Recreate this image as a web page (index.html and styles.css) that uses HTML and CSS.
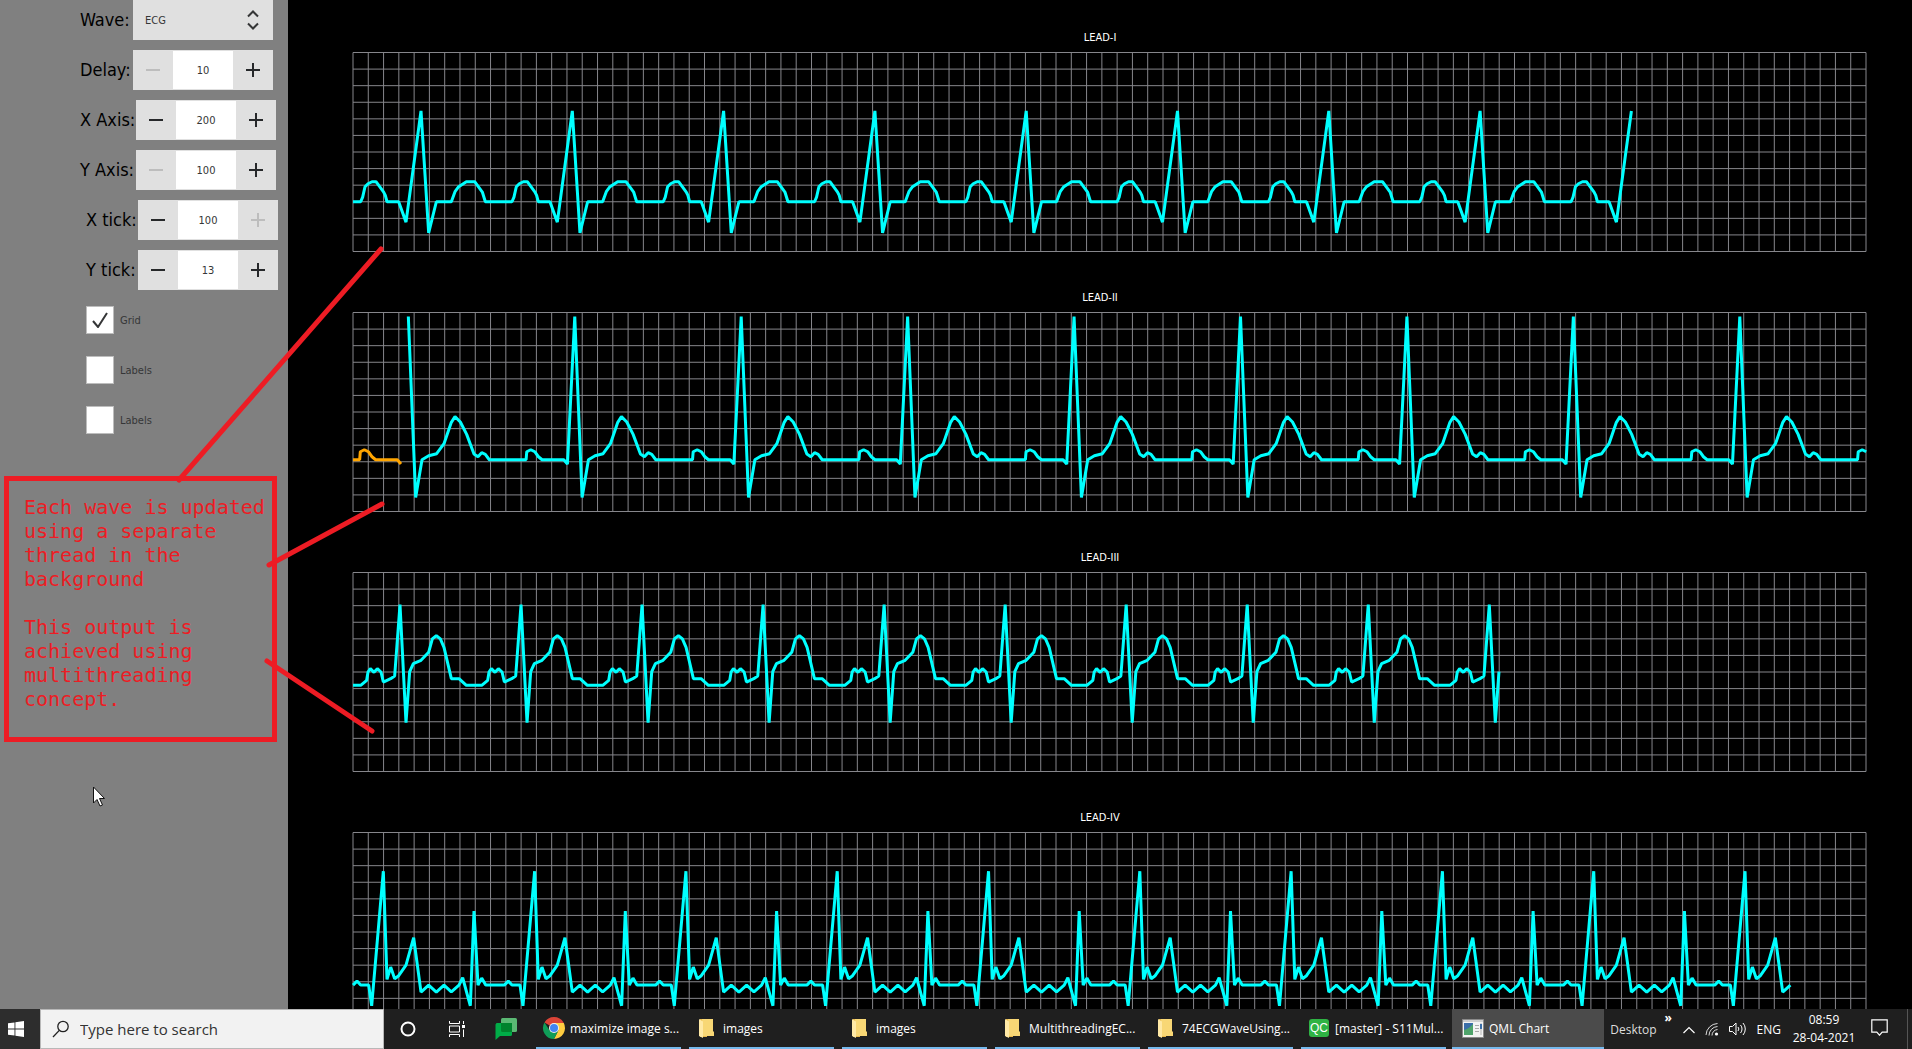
FILE: index.html
```html
<!DOCTYPE html>
<html lang="en">
<head>
<meta charset="utf-8">
<title>QML Chart</title>
<link rel="stylesheet" href="styles.css">
</head>
<body>
<div class="window">
  <aside class="sidebar">
    <div class="row">
      <label class="caption" for="wave">Wave:</label>
      <div class="combo">
        <select id="wave"><option>ECG</option><option>Sine</option></select>
        <svg class="combo-arrows" viewBox="0 0 12 20"><path d="M1 6.500 6 1.500 11 6.500M1 13.500 6 18.500 11 13.500"/></svg>
      </div>
    </div>
    <div class="row">
      <label class="caption" for="delay">Delay:</label>
      <div class="spin"><button class="minus" aria-label="Decrease delay" disabled></button><input id="delay" type="text" value="10"><button class="plus" aria-label="Increase delay"></button></div>
    </div>
    <div class="row axis">
      <label class="caption" for="xaxis">X Axis:</label>
      <div class="spin"><button class="minus" aria-label="Decrease X axis"></button><input id="xaxis" type="text" value="200"><button class="plus" aria-label="Increase X axis"></button></div>
    </div>
    <div class="row axis">
      <label class="caption" for="yaxis">Y Axis:</label>
      <div class="spin"><button class="minus" aria-label="Decrease Y axis" disabled></button><input id="yaxis" type="text" value="100"><button class="plus" aria-label="Increase Y axis"></button></div>
    </div>
    <div class="row tick">
      <label class="caption" for="xtick">X tick:</label>
      <div class="spin"><button class="minus" aria-label="Decrease X tick"></button><input id="xtick" type="text" value="100"><button class="plus" aria-label="Increase X tick" disabled></button></div>
    </div>
    <div class="row tick">
      <label class="caption" for="ytick">Y tick:</label>
      <div class="spin"><button class="minus" aria-label="Decrease Y tick"></button><input id="ytick" type="text" value="13"><button class="plus" aria-label="Increase Y tick"></button></div>
    </div>
    <div class="row tick"><label class="check"><input type="checkbox" checked>Grid</label></div>
    <div class="row tick"><label class="check"><input type="checkbox">Labels</label></div>
    <div class="row tick"><label class="check"><input type="checkbox">Labels</label></div>
  </aside>

  <main class="charts">
    <section class="chart"><h2>LEAD-I</h2><div class="frame"><svg class="plot" data-lead="1" viewBox="0 -1.5 4539 596" preserveAspectRatio="none"></svg></div></section>
    <section class="chart"><h2>LEAD-II</h2><div class="frame"><svg class="plot" data-lead="2" viewBox="0 -1.5 4539 596" preserveAspectRatio="none"></svg></div></section>
    <section class="chart"><h2>LEAD-III</h2><div class="frame"><svg class="plot" data-lead="3" viewBox="0 -1.5 4539 596" preserveAspectRatio="none"></svg></div></section>
    <section class="chart"><h2>LEAD-IV</h2><div class="frame"><svg class="plot" data-lead="4" viewBox="0 -1.5 4539 596" preserveAspectRatio="none"></svg></div></section>
  </main>

  <div class="note">
    <p>Each wave is updated using a separate thread in the background</p>
    <p>This output is achieved using multithreading concept.</p>
  </div>
  <svg class="pointers" width="400" height="820" viewBox="0 0 400 820">
    <path class="pointer" d="M179 480 381 249M269 565 382 504M267 661 372 731"/>
    <path class="cursor" d="M93.500 787v16l3.500-3.500 3 6.500 2.500-1-3-6.500h5z"/>
  </svg>
</div>

<footer class="taskbar">
  <button class="start" aria-label="Start">
    <svg width="16" height="16" viewBox="0 0 16 16"><path fill="#fff" d="M0 2.300 6.500 1.400v6.200H0zM7.400 1.300 16 0v7.600H7.400zM0 8.400h6.500v6.200L0 13.700zM7.400 8.400H16V16l-8.600-1.300z"/></svg>
  </button>
  <div class="search">
    <svg width="18" height="18" viewBox="0 0 18 18"><circle cx="11" cy="6.500" r="5.200"/><path d="M7.300 10.400 1 17"/></svg>
    <input type="text" aria-label="Search" placeholder="Type here to search">
  </div>
  <div class="tools">
    <button class="tool" aria-label="Cortana"><svg width="18" height="18" viewBox="0 0 18 18"><circle cx="9" cy="9" r="6.500" fill="none" stroke="#fff" stroke-width="2"/></svg></button>
    <button class="tool" aria-label="Task View"><svg width="18" height="16" viewBox="0 0 18 16"><path fill="none" stroke="#fff" d="M1.500 0v2.500h10V0M1.500 5h10v6h-10zM1.500 16v-2.500h10V16M15.500 0v3M15.500 8.500V16"/><path fill="#fff" d="M14 4h3v3h-3z"/></svg></button>
    <button class="tool" aria-label="Chat"><svg width="22" height="22" viewBox="0 0 22 22"><rect x="6" width="16" height="14" rx="1.500" fill="#5bb974"/><path fill="#00ac47" d="M1.500 5H17v11.500a1.500 1.500 0 0 1-1.500 1.500H5l-4.500 4V6.500z"/><path fill="#00832d" d="M6 5h11v9H7.500A1.500 1.500 0 0 1 6 12.500z"/></svg></button>
  </div>

  <nav class="tasks">
    <button class="task"><svg class="icon" viewBox="0 0 24 24"><path fill="#db4437" d="M12 12 2.470 6.500A11 11 0 0 1 21.530 6.500z"/><path fill="#db4437" d="M12 7h9.800l-.3-.5H12z"/><path fill="#ffcd40" d="M12 7h9.800a11 11 0 0 1-9.800 16l4.330-8.500z"/><path fill="#0f9d58" d="M2.470 6.500 7.670 14.500 12 17l4.330-2.500L12 23A11 11 0 0 1 2.470 6.500z"/><circle cx="12" cy="12" r="5" fill="#f1f1f1"/><circle cx="12" cy="12" r="4" fill="#4285f4"/></svg><span>maximize image s...</span></button>
    <button class="task"><svg class="icon" viewBox="0 0 24 24"><use href="#folder"/></svg><span>images</span></button>
    <button class="task"><svg class="icon" viewBox="0 0 24 24"><use href="#folder"/></svg><span>images</span></button>
    <button class="task"><svg class="icon" viewBox="0 0 24 24"><use href="#folder"/></svg><span>MultithreadingEC...</span></button>
    <button class="task"><svg class="icon" viewBox="0 0 24 24"><use href="#folder"/></svg><span>74ECGWaveUsing...</span></button>
    <button class="task"><span class="icon qc">QC</span><span>[master] - S11Mul...</span></button>
    <button class="task active"><svg class="icon" viewBox="0 0 24 24"><path fill="#f3f3f3" stroke="#8a8a8a" d="M1.500 3.500h21v18h-21z"/><path fill="#cfcfcf" d="M2 4h20v2H2z"/><path fill="#3b6ea8" d="M3 7h9v12H3z"/><path fill="#4fa36b" d="M3 14c4-1 7-4 9-6v11H3z"/><path stroke="#a9a9a9" d="M14 9.500h4M14 12.500h4M14 15.500h4"/><path fill="#d5d5d5" d="M19 7h2v12h-2z"/><path fill="#3b6ea8" d="M19 8h2v5h-2z"/></svg><span>QML Chart</span></button>
  </nav>

  <div class="tray">
    <button class="desktop">Desktop<span class="more">»</span></button>
    <button class="chevron" aria-label="Hidden icons"><svg width="12" height="8" viewBox="0 0 12 8"><path fill="none" stroke="#fff" stroke-width="1.200" d="M.5 7 6 1.500 11.500 7"/></svg></button>
    <svg width="14" height="14" viewBox="0 0 14 14"><g fill="none" stroke="#ddd"><path d="M1 13A12 12 0 0 1 12.500 1.500"/><path d="M4 13.500A9 9 0 0 1 12.500 4.500"/><path d="M7 13.500A6 6 0 0 1 12.500 7.500"/></g><circle cx="11.500" cy="12" r="1.600" fill="#fff"/></svg>
    <svg width="18" height="14" viewBox="0 0 18 14"><g fill="none" stroke="#fff"><path d="M.5 4.500h3l3.500-3.500v12L3.500 9.500h-3zM9 5a3 3 0 0 1 0 4M11.500 3a6 6 0 0 1 0 8M14 1a9 9 0 0 1 0 12"/></g></svg>
    <span class="lang">ENG</span>
    <time class="clock" datetime="2021-04-28T08:59"><span>08:59</span><span>28-04-2021</span></time>
    <button class="notices" aria-label="Notifications"><svg width="17" height="18" viewBox="0 0 17 18"><path fill="none" stroke="#fff" stroke-width="1.200" d="M.8 1.800h15.400v12.400h-5l-2.700 3-2.700-3H.8z"/></svg></button>
  </div>
</footer>

<svg class="defs" width="0" height="0"><defs><g id="folder"><path fill="#e8b84a" d="M5 3h6l1 1v17H5z"/><path fill="#f8d775" d="M7 3h11v12l1 1v4H8z"/><path fill="#ffe9a6" d="M4 3l4 2.500V22l-4-2z"/></g></defs></svg>
<script src="charts.js"></script>
</body>
</html>
```
FILE: styles.css
```css
* { box-sizing: border-box; }

body {
  margin: 0;
  height: 100vh;
  display: flex;
  flex-direction: column;
  overflow: hidden;
  background: #000;
  font-family: "Open Sans", "Noto Sans", sans-serif;
}

button, input, select { font: inherit; border: 0; margin: 0; padding: 0; border-radius: 0; }
button { background: none; color: inherit; }

.window {
  position: relative;
  flex: 1;
  min-height: 0;
  display: flex;
  overflow: hidden;
  font: 11px "DejaVu Sans Condensed", "Noto Sans", sans-serif;
}

/* control panel */
.sidebar {
  width: 288px;
  flex: none;
  display: flex;
  flex-direction: column;
  gap: 10px;
  background: #808080;
  color: #353637;
}
.row { display: flex; align-items: center; height: 40px; padding-left: 80px; }
.row.tick { padding-left: 86px; }
.caption { width: 53px; font-size: 18px; line-height: 40px; white-space: nowrap; color: #000; }
.axis .caption { width: 56px; }
.tick .caption { width: 52px; }

.combo { position: relative; width: 140px; height: 40px; }
.combo select {
  appearance: none;
  width: 100%;
  height: 100%;
  padding-left: 12px;
  background: #e0e0e0;
  color: #353637;
}
.combo-arrows { position: absolute; right: 14px; top: 10px; width: 12px; height: 20px; fill: none; stroke: #353637; stroke-width: 2; pointer-events: none; }

.spin { display: flex; width: 140px; height: 40px; background: #e0e0e0; }
.spin input {
  width: 60px;
  margin: 1px 0;
  background: #fff;
  text-align: center;
  color: #353637;
}
.spin button {
  width: 40px;
  color: #26282a;
  background: linear-gradient(currentColor, currentColor) center / 14px 2px no-repeat;
}
.spin .plus { background: linear-gradient(currentColor, currentColor) center / 14px 2px no-repeat, linear-gradient(currentColor, currentColor) center / 2px 14px no-repeat; }
.spin button:disabled { color: #bdbdbd; }

.check { display: flex; align-items: center; gap: 6px; }
.check input { appearance: none; width: 28px; height: 28px; background: #fff; border: 1px solid #bdbdbd; }
.check input:checked {
  background: #fff url("data:image/svg+xml,%3Csvg xmlns='http://www.w3.org/2000/svg' width='16' height='16'%3E%3Cpath d='M1 9l5 6L15 1' fill='none' stroke='%23353637' stroke-width='2'/%3E%3C/svg%3E") center no-repeat;
}

/* charts */
.charts { flex: 1; min-width: 0; padding-top: 28px; overflow: hidden; }
.chart { height: 260px; }
.chart h2 { margin: 0 0 4px; color: #fff; text-align: center; font-size: 11px; font-weight: 400; line-height: 20px; }
.frame { padding: 0 46px 0 65px; }
.plot { display: block; width: 100%; height: 199px; overflow: visible; fill: none; }
.plot path { vector-effect: non-scaling-stroke; }
.grid { stroke: #86868b; stroke-width: 1; }
.trace { stroke: #0ff; stroke-width: 3; stroke-linejoin: bevel; }
.trace.fresh { stroke: orange; }

/* annotation over the panel */
.note {
  position: absolute;
  left: 4px;
  top: 476px;
  width: 273px;
  height: 266px;
  padding: 14px 0 0 15px;
  border: 5px solid #ed1c24;
  color: #ed1c24;
  font: 20px/24px "DejaVu Sans Mono", monospace;
}
.note p { margin: 0 0 24px; }
.pointers { position: absolute; left: 0; top: 0; pointer-events: none; }
.pointer { fill: none; stroke: #ed1c24; stroke-width: 5; stroke-linecap: round; }
.cursor { fill: #fff; stroke: #111; }

/* taskbar */
.taskbar { flex: none; height: 40px; display: flex; background: #1f1f1f; color: #fff; font-size: 12px; }
.start { width: 40px; background: #2d2d2d; display: grid; place-items: center; padding-right: 8px; }
.search { width: 344px; display: flex; align-items: center; gap: 10px; padding-left: 11px; background: #f2f2f2; border: 1px solid #b8b8b8; }
.search svg { flex: none; fill: none; stroke: #222; stroke-width: 1.3; }
.search input { flex: 1; min-width: 0; background: none; font-size: 15px; }
.search input::placeholder { color: #333; opacity: 1; }
.tools { display: flex; width: 152px; }
.tool { width: 49px; padding-right: 1px; display: grid; place-items: center; }
.tasks { display: flex; gap: 8px; }
.task { width: 145px; display: flex; align-items: center; gap: 4px; padding-left: 6px; border-bottom: 2px solid #76b9ed; white-space: nowrap; text-align: left; }
.task .icon { flex: none; width: 24px; height: 24px; }
.task .qc { width: 20px; height: 18px; margin: 0 2px; background: #2fb344; border-radius: 3px; text-align: center; font: 12px/18px "Liberation Sans", sans-serif; }
.task.active { width: 152px; margin-left: -2px; padding-left: 9px; background: #4b4b4b; }
.tray { flex: 1; display: flex; align-items: center; justify-content: flex-end; gap: 10px; margin-right: 4px; padding-right: 19px; border-right: 1px solid #555; }
.desktop { position: relative; color: #ddd; margin-right: 16px; }
.more { position: absolute; left: 100%; top: -12px; margin-left: 8px; font-weight: 700; color: #fff; }
.clock { display: flex; flex-direction: column; text-align: center; line-height: 18px; width: 66px; white-space: nowrap; }
.notices { margin-left: 4px; }
```
FILE: charts.js
```js
// One cycle of each lead as [x, y] pairs in plot units, the cycle length, and where the trace stops.
const leads = {
  1: { period: 453.9, end: 3836, cycle: [[0,447],[23,447],[29,433],[36,402],[45,393],[57,387],[69,387],[80,402],[92,418],[97,428],[102,447],[137,447],[159,508],[204,175],[227,540],[250,447],[295,447],[306,417],[317,402],[340,387],[365,387],[376,402],[388,418],[397,447]] },
  2: { period: 499.3, start: 165, end: 4539, cycle: [[0,441],[20,441],[22,417],[34,411],[46,417],[57,432],[68,441],[133,441],[144,454],[166,12],[188,554],[207,441],[227,429],[251,423],[273,393],[295,329],[306,312],[322,328],[341,365],[363,424],[375,432],[386,420],[397,425],[409,441]] },
  3: { period: 363.1, end: 3440, cycle: [[0,338],[23,338],[41,323],[45,298],[52,288],[63,299],[73,288],[84,298],[91,328],[113,318],[125,310],[141,96],[159,450],[170,297],[181,273],[204,263],[227,239],[238,199],[250,189],[262,199],[273,224],[295,318],[318,318],[340,338]] },
  4: { period: 453.9, end: 4315, cycle: [[0,457],[12,445],[23,457],[47,457],[56,519],[91,116],[102,440],[113,403],[125,438],[136,430],[159,397],[182,315],[204,478],[227,457],[250,478],[273,457],[295,477],[318,457],[329,435],[352,519],[363,235],[375,457],[386,436],[398,457]] }
};

function addPath(svg, d, cls) {
  const p = document.createElementNS("http://www.w3.org/2000/svg", "path");
  p.setAttribute("d", d);
  p.setAttribute("class", cls);
  svg.append(p);
}

function trace(lead, from, to) {
  const pts = [];
  for (let k = 0; k < 14; k++) {
    for (const [x, y] of lead.cycle) {
      const px = x + k * lead.period;
      if (px >= from && px <= to) pts.push(px.toFixed(1) + " " + y);
    }
  }
  return "M" + pts.join("L");
}

for (const svg of document.querySelectorAll(".plot")) {
  let grid = "";
  for (let i = 0; i < 100; i++) grid += `M${(i * 4539 / 99).toFixed(1)} 0V596`;
  for (let i = 0; i < 13; i++) grid += `M0 ${(i * 596 / 12).toFixed(1)}H4539`;
  addPath(svg, grid, "grid");
  const lead = leads[svg.dataset.lead];
  addPath(svg, trace(lead, lead.start || 0, lead.end + 1), "trace");
  if (lead.start) addPath(svg, trace(lead, 0, lead.start - 1), "trace fresh");
}
```
